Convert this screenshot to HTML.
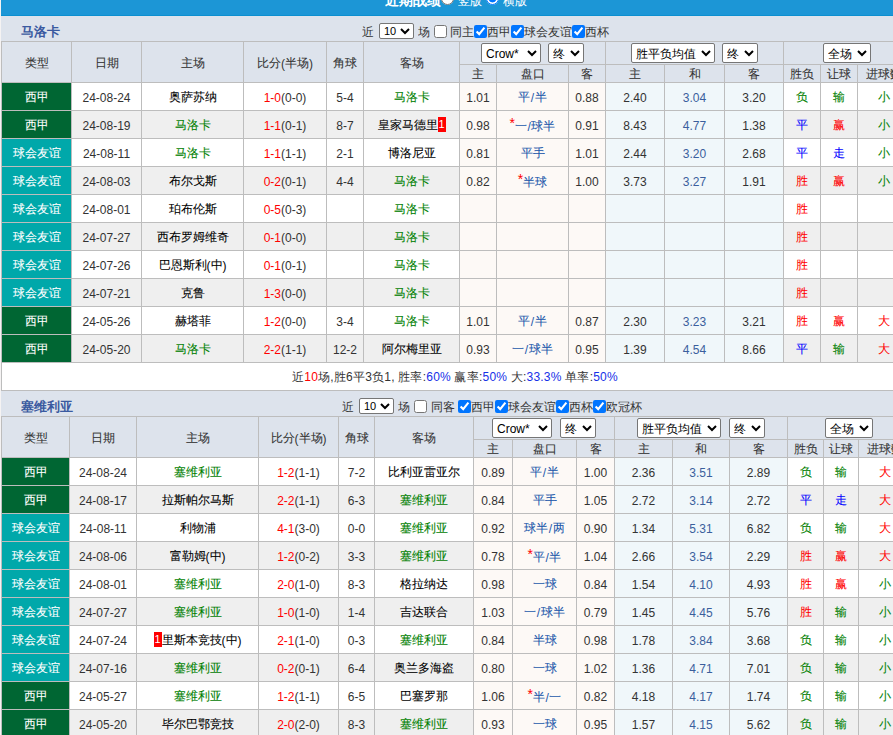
<!DOCTYPE html>
<html><head><meta charset="utf-8">
<style>
html,body{margin:0;padding:0;overflow:hidden;width:893px;height:735px;background:#f5f3f3}
body{font-family:"Liberation Sans",sans-serif;font-size:12px;position:relative}
div{position:absolute;box-sizing:border-box;overflow:hidden}
.rc{display:inline-block;background:#f00;color:#fff;font-size:11px;line-height:15px;height:15px;width:8px;text-align:center;vertical-align:2px}
.z{position:relative;top:-1px;-webkit-text-stroke:0.08px}
.bl{color:#1530e8}
.cb{width:13px;height:13px;margin:0;display:block}
.cb0{margin:0 2px}
.sl{font-family:"Liberation Sans",sans-serif;font-size:12px;height:20px;padding:1px 0 0 0;margin:0;border:1px solid #767676;border-radius:2px;display:block;background:#fff;color:#000}
.s10{width:35px;height:16px;font-size:11px;padding:0}
.rd{width:13px;height:13px;margin:0;display:block}
</style></head><body>
<div style="left:1px;top:0;width:893px;height:16px;background:#1c96d6;border-bottom:0"></div>
<div style="left:1px;top:15px;width:893px;height:1px;background:#0b8fd0"></div>
<div style="left:1px;top:16px;width:893px;height:1px;background:#e6e7ec"></div>
<div style="left:385px;top:-9px;width:60px;height:18px;line-height:18px;white-space:nowrap;color:#fff;font-size:14px;font-weight:bold">近期战绩</div>
<div style="left:441px;top:-8px;width:13px;height:13px"><input type="radio" name="r" class="rd"></div>
<div style="left:458px;top:-7px;width:30px;height:16px;line-height:16px;white-space:nowrap;color:#fff;font-size:12px">竖版</div>
<div style="left:486px;top:-8px;width:13px;height:13px"><input type="radio" name="r" class="rd" checked></div>
<div style="left:503px;top:-7px;width:30px;height:16px;line-height:16px;white-space:nowrap;color:#fff;font-size:12px">横版</div>

<div style="left:1px;top:16px;width:893px;height:25px;background:#dde3ec"></div><div style="left:21px;top:17px;width:100px;height:24px;line-height:24px;padding-top:3px;font-weight:bold;font-size:13px;color:#3a5aa0">马洛卡</div><div style="left:362px;top:22px;width:120px;height:17px;line-height:16px;white-space:nowrap;font-size:12px;color:#333;padding-top:2px">近</div><div style="left:379px;top:23px;width:36px;height:16px;"><select class="sl s10"><option>10</option></select></div><div style="left:418px;top:22px;width:120px;height:17px;line-height:16px;white-space:nowrap;font-size:12px;color:#333;padding-top:2px">场</div><div style="left:434px;top:25px;width:13px;height:13px;"><input type="checkbox" class="cb" ></div><div style="left:450px;top:22px;width:120px;height:17px;line-height:16px;white-space:nowrap;font-size:12px;color:#333;padding-top:2px">同主</div><div style="left:474px;top:25px;width:13px;height:13px;"><input type="checkbox" class="cb" checked></div><div style="left:487px;top:22px;width:120px;height:17px;line-height:16px;white-space:nowrap;font-size:12px;color:#333;padding-top:2px">西甲</div><div style="left:511px;top:25px;width:13px;height:13px;"><input type="checkbox" class="cb" checked></div><div style="left:524px;top:22px;width:120px;height:17px;line-height:16px;white-space:nowrap;font-size:12px;color:#333;padding-top:2px">球会友谊</div><div style="left:572px;top:25px;width:13px;height:13px;"><input type="checkbox" class="cb" checked></div><div style="left:585px;top:22px;width:120px;height:17px;line-height:16px;white-space:nowrap;font-size:12px;color:#333;padding-top:2px">西杯</div><div style="left:1px;top:41px;width:910px;height:322px;background:#bdbdbd"></div><div style="left:2px;top:42px;width:69px;height:40px;background:#dde3ec;line-height:40px;padding-top:2px;text-align:center;color:#333"><span class="z">类型</span></div><div style="left:72px;top:42px;width:69px;height:40px;background:#dde3ec;line-height:40px;padding-top:2px;text-align:center;color:#333"><span class="z">日期</span></div><div style="left:142px;top:42px;width:101px;height:40px;background:#dde3ec;line-height:40px;padding-top:2px;text-align:center;color:#333"><span class="z">主场</span></div><div style="left:244px;top:42px;width:82px;height:40px;background:#dde3ec;line-height:40px;padding-top:2px;text-align:center;color:#333"><span class="z">比分</span>(<span class="z">半场</span>)</div><div style="left:327px;top:42px;width:36px;height:40px;background:#dde3ec;line-height:40px;padding-top:2px;text-align:center;color:#333"><span class="z">角球</span></div><div style="left:364px;top:42px;width:95px;height:40px;background:#dde3ec;line-height:40px;padding-top:2px;text-align:center;color:#333"><span class="z">客场</span></div><div style="left:460px;top:42px;width:145px;height:22px;background:#dde3ec;line-height:22px;padding-top:2px;"></div><div style="left:606px;top:42px;width:177px;height:22px;background:#dde3ec;line-height:22px;padding-top:2px;"></div><div style="left:784px;top:42px;width:126px;height:22px;background:#dde3ec;line-height:22px;padding-top:2px;"></div><div style="left:460px;top:65px;width:36px;height:17px;background:#dde3ec;line-height:17px;padding-top:2px;text-align:center;color:#333"><span class="z">主</span></div><div style="left:497px;top:65px;width:71px;height:17px;background:#dde3ec;line-height:17px;padding-top:2px;text-align:center;color:#333"><span class="z">盘口</span></div><div style="left:569px;top:65px;width:36px;height:17px;background:#dde3ec;line-height:17px;padding-top:2px;text-align:center;color:#333"><span class="z">客</span></div><div style="left:606px;top:65px;width:58px;height:17px;background:#dde3ec;line-height:17px;padding-top:2px;text-align:center;color:#333"><span class="z">主</span></div><div style="left:665px;top:65px;width:59px;height:17px;background:#dde3ec;line-height:17px;padding-top:2px;text-align:center;color:#333"><span class="z">和</span></div><div style="left:725px;top:65px;width:58px;height:17px;background:#dde3ec;line-height:17px;padding-top:2px;text-align:center;color:#333"><span class="z">客</span></div><div style="left:784px;top:65px;width:36px;height:17px;background:#dde3ec;line-height:17px;padding-top:2px;text-align:center;color:#333"><span class="z">胜负</span></div><div style="left:821px;top:65px;width:36px;height:17px;background:#dde3ec;line-height:17px;padding-top:2px;text-align:center;color:#333"><span class="z">让球</span></div><div style="left:858px;top:65px;width:52px;height:17px;background:#dde3ec;line-height:17px;padding-top:2px;text-align:center;color:#333"><span class="z">进球数</span></div><div style="left:481px;top:43px;width:60px;height:20px;"><select class="sl" style="width:60px"><option>Crow*</option></select></div><div style="left:548px;top:43px;width:36px;height:20px;"><select class="sl" style="width:36px"><option>终</option></select></div><div style="left:631px;top:43px;width:84px;height:20px;"><select class="sl" style="width:84px"><option>胜平负均值</option></select></div><div style="left:722px;top:43px;width:36px;height:20px;"><select class="sl" style="width:36px"><option>终</option></select></div><div style="left:823px;top:43px;width:48px;height:20px;"><select class="sl" style="width:48px"><option>全场</option></select></div><div style="left:2px;top:83px;width:69px;height:27px;background:#006633;line-height:27px;padding-top:2px;text-align:center;color:#fff"><span class="z">西甲</span></div><div style="left:72px;top:83px;width:69px;height:27px;background:#ffffff;line-height:27px;padding-top:2px;text-align:center;color:#333">24-08-24</div><div style="left:142px;top:83px;width:101px;height:27px;background:#ffffff;line-height:27px;padding-top:2px;text-align:center;color:#000"><span class="z">奥萨苏纳</span></div><div style="left:244px;top:83px;width:82px;height:27px;background:#ffffff;line-height:27px;padding-top:2px;text-align:center;color:#333"><span style="color:#ff0000">1-0</span>(0-0)</div><div style="left:327px;top:83px;width:36px;height:27px;background:#ffffff;line-height:27px;padding-top:2px;text-align:center;color:#333">5-4</div><div style="left:364px;top:83px;width:95px;height:27px;background:#ffffff;line-height:27px;padding-top:2px;text-align:center;color:#000"><span style="color:#008000"><span class="z">马洛卡</span></span></div><div style="left:460px;top:83px;width:36px;height:27px;background:#fdf9f6;line-height:27px;padding-top:2px;text-align:center;color:#333">1.01</div><div style="left:497px;top:83px;width:71px;height:27px;background:#fdf9f6;line-height:27px;padding-top:2px;text-align:center;color:#2358ab"><span class="z">平</span><span style="margin:0 0.5px">/</span><span class="z">半</span></div><div style="left:569px;top:83px;width:36px;height:27px;background:#fdf9f6;line-height:27px;padding-top:2px;text-align:center;color:#333">0.88</div><div style="left:606px;top:83px;width:58px;height:27px;background:#f0f7fa;line-height:27px;padding-top:2px;text-align:center;color:#333">2.40</div><div style="left:665px;top:83px;width:59px;height:27px;background:#f0f7fa;line-height:27px;padding-top:2px;text-align:center;color:#3b5f9d">3.04</div><div style="left:725px;top:83px;width:58px;height:27px;background:#f0f7fa;line-height:27px;padding-top:2px;text-align:center;color:#333">3.20</div><div style="left:784px;top:83px;width:36px;height:27px;background:#ffffff;line-height:27px;padding-top:2px;text-align:center;color:#008000"><span class="z">负</span></div><div style="left:821px;top:83px;width:36px;height:27px;background:#ffffff;line-height:27px;padding-top:2px;text-align:center;color:#008000"><span class="z">输</span></div><div style="left:858px;top:83px;width:52px;height:27px;background:#ffffff;line-height:27px;padding-top:2px;text-align:center;color:#008000"><span class="z">小</span></div><div style="left:2px;top:111px;width:69px;height:27px;background:#006633;line-height:27px;padding-top:2px;text-align:center;color:#fff"><span class="z">西甲</span></div><div style="left:72px;top:111px;width:69px;height:27px;background:#efefef;line-height:27px;padding-top:2px;text-align:center;color:#333">24-08-19</div><div style="left:142px;top:111px;width:101px;height:27px;background:#efefef;line-height:27px;padding-top:2px;text-align:center;color:#000"><span style="color:#008000"><span class="z">马洛卡</span></span></div><div style="left:244px;top:111px;width:82px;height:27px;background:#efefef;line-height:27px;padding-top:2px;text-align:center;color:#333"><span style="color:#ff0000">1-1</span>(0-1)</div><div style="left:327px;top:111px;width:36px;height:27px;background:#efefef;line-height:27px;padding-top:2px;text-align:center;color:#333">8-7</div><div style="left:364px;top:111px;width:95px;height:27px;background:#efefef;line-height:27px;padding-top:2px;text-align:center;color:#000"><span class="z">皇家马德里</span><span class="rc">1</span></div><div style="left:460px;top:111px;width:36px;height:27px;background:#fdf9f6;line-height:27px;padding-top:2px;text-align:center;color:#333">0.98</div><div style="left:497px;top:111px;width:71px;height:27px;background:#fdf9f6;line-height:27px;padding-top:2px;text-align:center;color:#2358ab"><span style="color:#ff0000;position:relative;top:-3px;font-size:14px">*</span><span class="z">一</span><span style="margin:0 0.5px">/</span><span class="z">球半</span></div><div style="left:569px;top:111px;width:36px;height:27px;background:#fdf9f6;line-height:27px;padding-top:2px;text-align:center;color:#333">0.91</div><div style="left:606px;top:111px;width:58px;height:27px;background:#f0f7fa;line-height:27px;padding-top:2px;text-align:center;color:#333">8.43</div><div style="left:665px;top:111px;width:59px;height:27px;background:#f0f7fa;line-height:27px;padding-top:2px;text-align:center;color:#3b5f9d">4.77</div><div style="left:725px;top:111px;width:58px;height:27px;background:#f0f7fa;line-height:27px;padding-top:2px;text-align:center;color:#333">1.38</div><div style="left:784px;top:111px;width:36px;height:27px;background:#efefef;line-height:27px;padding-top:2px;text-align:center;color:#0000ff"><span class="z">平</span></div><div style="left:821px;top:111px;width:36px;height:27px;background:#efefef;line-height:27px;padding-top:2px;text-align:center;color:#ff0000"><span class="z">赢</span></div><div style="left:858px;top:111px;width:52px;height:27px;background:#efefef;line-height:27px;padding-top:2px;text-align:center;color:#008000"><span class="z">小</span></div><div style="left:2px;top:139px;width:69px;height:27px;background:#00a8aa;line-height:27px;padding-top:2px;text-align:center;color:#fff"><span class="z">球会友谊</span></div><div style="left:72px;top:139px;width:69px;height:27px;background:#ffffff;line-height:27px;padding-top:2px;text-align:center;color:#333">24-08-11</div><div style="left:142px;top:139px;width:101px;height:27px;background:#ffffff;line-height:27px;padding-top:2px;text-align:center;color:#000"><span style="color:#008000"><span class="z">马洛卡</span></span></div><div style="left:244px;top:139px;width:82px;height:27px;background:#ffffff;line-height:27px;padding-top:2px;text-align:center;color:#333"><span style="color:#ff0000">1-1</span>(1-1)</div><div style="left:327px;top:139px;width:36px;height:27px;background:#ffffff;line-height:27px;padding-top:2px;text-align:center;color:#333">2-1</div><div style="left:364px;top:139px;width:95px;height:27px;background:#ffffff;line-height:27px;padding-top:2px;text-align:center;color:#000"><span class="z">博洛尼亚</span></div><div style="left:460px;top:139px;width:36px;height:27px;background:#fdf9f6;line-height:27px;padding-top:2px;text-align:center;color:#333">0.81</div><div style="left:497px;top:139px;width:71px;height:27px;background:#fdf9f6;line-height:27px;padding-top:2px;text-align:center;color:#2358ab"><span class="z">平手</span></div><div style="left:569px;top:139px;width:36px;height:27px;background:#fdf9f6;line-height:27px;padding-top:2px;text-align:center;color:#333">1.01</div><div style="left:606px;top:139px;width:58px;height:27px;background:#f0f7fa;line-height:27px;padding-top:2px;text-align:center;color:#333">2.44</div><div style="left:665px;top:139px;width:59px;height:27px;background:#f0f7fa;line-height:27px;padding-top:2px;text-align:center;color:#3b5f9d">3.20</div><div style="left:725px;top:139px;width:58px;height:27px;background:#f0f7fa;line-height:27px;padding-top:2px;text-align:center;color:#333">2.68</div><div style="left:784px;top:139px;width:36px;height:27px;background:#ffffff;line-height:27px;padding-top:2px;text-align:center;color:#0000ff"><span class="z">平</span></div><div style="left:821px;top:139px;width:36px;height:27px;background:#ffffff;line-height:27px;padding-top:2px;text-align:center;color:#0000ff"><span class="z">走</span></div><div style="left:858px;top:139px;width:52px;height:27px;background:#ffffff;line-height:27px;padding-top:2px;text-align:center;color:#008000"><span class="z">小</span></div><div style="left:2px;top:167px;width:69px;height:27px;background:#00a8aa;line-height:27px;padding-top:2px;text-align:center;color:#fff"><span class="z">球会友谊</span></div><div style="left:72px;top:167px;width:69px;height:27px;background:#efefef;line-height:27px;padding-top:2px;text-align:center;color:#333">24-08-03</div><div style="left:142px;top:167px;width:101px;height:27px;background:#efefef;line-height:27px;padding-top:2px;text-align:center;color:#000"><span class="z">布尔戈斯</span></div><div style="left:244px;top:167px;width:82px;height:27px;background:#efefef;line-height:27px;padding-top:2px;text-align:center;color:#333"><span style="color:#ff0000">0-2</span>(0-1)</div><div style="left:327px;top:167px;width:36px;height:27px;background:#efefef;line-height:27px;padding-top:2px;text-align:center;color:#333">4-4</div><div style="left:364px;top:167px;width:95px;height:27px;background:#efefef;line-height:27px;padding-top:2px;text-align:center;color:#000"><span style="color:#008000"><span class="z">马洛卡</span></span></div><div style="left:460px;top:167px;width:36px;height:27px;background:#fdf9f6;line-height:27px;padding-top:2px;text-align:center;color:#333">0.82</div><div style="left:497px;top:167px;width:71px;height:27px;background:#fdf9f6;line-height:27px;padding-top:2px;text-align:center;color:#2358ab"><span style="color:#ff0000;position:relative;top:-3px;font-size:14px">*</span><span class="z">半球</span></div><div style="left:569px;top:167px;width:36px;height:27px;background:#fdf9f6;line-height:27px;padding-top:2px;text-align:center;color:#333">1.00</div><div style="left:606px;top:167px;width:58px;height:27px;background:#f0f7fa;line-height:27px;padding-top:2px;text-align:center;color:#333">3.73</div><div style="left:665px;top:167px;width:59px;height:27px;background:#f0f7fa;line-height:27px;padding-top:2px;text-align:center;color:#3b5f9d">3.27</div><div style="left:725px;top:167px;width:58px;height:27px;background:#f0f7fa;line-height:27px;padding-top:2px;text-align:center;color:#333">1.91</div><div style="left:784px;top:167px;width:36px;height:27px;background:#efefef;line-height:27px;padding-top:2px;text-align:center;color:#ff0000"><span class="z">胜</span></div><div style="left:821px;top:167px;width:36px;height:27px;background:#efefef;line-height:27px;padding-top:2px;text-align:center;color:#ff0000"><span class="z">赢</span></div><div style="left:858px;top:167px;width:52px;height:27px;background:#efefef;line-height:27px;padding-top:2px;text-align:center;color:#008000"><span class="z">小</span></div><div style="left:2px;top:195px;width:69px;height:27px;background:#00a8aa;line-height:27px;padding-top:2px;text-align:center;color:#fff"><span class="z">球会友谊</span></div><div style="left:72px;top:195px;width:69px;height:27px;background:#ffffff;line-height:27px;padding-top:2px;text-align:center;color:#333">24-08-01</div><div style="left:142px;top:195px;width:101px;height:27px;background:#ffffff;line-height:27px;padding-top:2px;text-align:center;color:#000"><span class="z">珀布伦斯</span></div><div style="left:244px;top:195px;width:82px;height:27px;background:#ffffff;line-height:27px;padding-top:2px;text-align:center;color:#333"><span style="color:#ff0000">0-5</span>(0-3)</div><div style="left:327px;top:195px;width:36px;height:27px;background:#ffffff;line-height:27px;padding-top:2px;text-align:center;color:#333"></div><div style="left:364px;top:195px;width:95px;height:27px;background:#ffffff;line-height:27px;padding-top:2px;text-align:center;color:#000"><span style="color:#008000"><span class="z">马洛卡</span></span></div><div style="left:460px;top:195px;width:36px;height:27px;background:#fdf9f6;line-height:27px;padding-top:2px;text-align:center;color:#333"></div><div style="left:497px;top:195px;width:71px;height:27px;background:#fdf9f6;line-height:27px;padding-top:2px;text-align:center;color:#2358ab"></div><div style="left:569px;top:195px;width:36px;height:27px;background:#fdf9f6;line-height:27px;padding-top:2px;text-align:center;color:#333"></div><div style="left:606px;top:195px;width:58px;height:27px;background:#f0f7fa;line-height:27px;padding-top:2px;text-align:center;color:#333"></div><div style="left:665px;top:195px;width:59px;height:27px;background:#f0f7fa;line-height:27px;padding-top:2px;text-align:center;color:#3b5f9d"></div><div style="left:725px;top:195px;width:58px;height:27px;background:#f0f7fa;line-height:27px;padding-top:2px;text-align:center;color:#333"></div><div style="left:784px;top:195px;width:36px;height:27px;background:#ffffff;line-height:27px;padding-top:2px;text-align:center;color:#ff0000"><span class="z">胜</span></div><div style="left:821px;top:195px;width:36px;height:27px;background:#ffffff;line-height:27px;padding-top:2px;text-align:center;color:#222222"></div><div style="left:858px;top:195px;width:52px;height:27px;background:#ffffff;line-height:27px;padding-top:2px;text-align:center;color:#222222"></div><div style="left:2px;top:223px;width:69px;height:27px;background:#00a8aa;line-height:27px;padding-top:2px;text-align:center;color:#fff"><span class="z">球会友谊</span></div><div style="left:72px;top:223px;width:69px;height:27px;background:#efefef;line-height:27px;padding-top:2px;text-align:center;color:#333">24-07-27</div><div style="left:142px;top:223px;width:101px;height:27px;background:#efefef;line-height:27px;padding-top:2px;text-align:center;color:#000"><span class="z">西布罗姆维奇</span></div><div style="left:244px;top:223px;width:82px;height:27px;background:#efefef;line-height:27px;padding-top:2px;text-align:center;color:#333"><span style="color:#ff0000">0-1</span>(0-0)</div><div style="left:327px;top:223px;width:36px;height:27px;background:#efefef;line-height:27px;padding-top:2px;text-align:center;color:#333"></div><div style="left:364px;top:223px;width:95px;height:27px;background:#efefef;line-height:27px;padding-top:2px;text-align:center;color:#000"><span style="color:#008000"><span class="z">马洛卡</span></span></div><div style="left:460px;top:223px;width:36px;height:27px;background:#fdf9f6;line-height:27px;padding-top:2px;text-align:center;color:#333"></div><div style="left:497px;top:223px;width:71px;height:27px;background:#fdf9f6;line-height:27px;padding-top:2px;text-align:center;color:#2358ab"></div><div style="left:569px;top:223px;width:36px;height:27px;background:#fdf9f6;line-height:27px;padding-top:2px;text-align:center;color:#333"></div><div style="left:606px;top:223px;width:58px;height:27px;background:#f0f7fa;line-height:27px;padding-top:2px;text-align:center;color:#333"></div><div style="left:665px;top:223px;width:59px;height:27px;background:#f0f7fa;line-height:27px;padding-top:2px;text-align:center;color:#3b5f9d"></div><div style="left:725px;top:223px;width:58px;height:27px;background:#f0f7fa;line-height:27px;padding-top:2px;text-align:center;color:#333"></div><div style="left:784px;top:223px;width:36px;height:27px;background:#efefef;line-height:27px;padding-top:2px;text-align:center;color:#ff0000"><span class="z">胜</span></div><div style="left:821px;top:223px;width:36px;height:27px;background:#efefef;line-height:27px;padding-top:2px;text-align:center;color:#222222"></div><div style="left:858px;top:223px;width:52px;height:27px;background:#efefef;line-height:27px;padding-top:2px;text-align:center;color:#222222"></div><div style="left:2px;top:251px;width:69px;height:27px;background:#00a8aa;line-height:27px;padding-top:2px;text-align:center;color:#fff"><span class="z">球会友谊</span></div><div style="left:72px;top:251px;width:69px;height:27px;background:#ffffff;line-height:27px;padding-top:2px;text-align:center;color:#333">24-07-26</div><div style="left:142px;top:251px;width:101px;height:27px;background:#ffffff;line-height:27px;padding-top:2px;text-align:center;color:#000"><span class="z">巴恩斯利</span>(<span class="z">中</span>)</div><div style="left:244px;top:251px;width:82px;height:27px;background:#ffffff;line-height:27px;padding-top:2px;text-align:center;color:#333"><span style="color:#ff0000">0-1</span>(0-1)</div><div style="left:327px;top:251px;width:36px;height:27px;background:#ffffff;line-height:27px;padding-top:2px;text-align:center;color:#333"></div><div style="left:364px;top:251px;width:95px;height:27px;background:#ffffff;line-height:27px;padding-top:2px;text-align:center;color:#000"><span style="color:#008000"><span class="z">马洛卡</span></span></div><div style="left:460px;top:251px;width:36px;height:27px;background:#fdf9f6;line-height:27px;padding-top:2px;text-align:center;color:#333"></div><div style="left:497px;top:251px;width:71px;height:27px;background:#fdf9f6;line-height:27px;padding-top:2px;text-align:center;color:#2358ab"></div><div style="left:569px;top:251px;width:36px;height:27px;background:#fdf9f6;line-height:27px;padding-top:2px;text-align:center;color:#333"></div><div style="left:606px;top:251px;width:58px;height:27px;background:#f0f7fa;line-height:27px;padding-top:2px;text-align:center;color:#333"></div><div style="left:665px;top:251px;width:59px;height:27px;background:#f0f7fa;line-height:27px;padding-top:2px;text-align:center;color:#3b5f9d"></div><div style="left:725px;top:251px;width:58px;height:27px;background:#f0f7fa;line-height:27px;padding-top:2px;text-align:center;color:#333"></div><div style="left:784px;top:251px;width:36px;height:27px;background:#ffffff;line-height:27px;padding-top:2px;text-align:center;color:#ff0000"><span class="z">胜</span></div><div style="left:821px;top:251px;width:36px;height:27px;background:#ffffff;line-height:27px;padding-top:2px;text-align:center;color:#222222"></div><div style="left:858px;top:251px;width:52px;height:27px;background:#ffffff;line-height:27px;padding-top:2px;text-align:center;color:#222222"></div><div style="left:2px;top:279px;width:69px;height:27px;background:#00a8aa;line-height:27px;padding-top:2px;text-align:center;color:#fff"><span class="z">球会友谊</span></div><div style="left:72px;top:279px;width:69px;height:27px;background:#efefef;line-height:27px;padding-top:2px;text-align:center;color:#333">24-07-21</div><div style="left:142px;top:279px;width:101px;height:27px;background:#efefef;line-height:27px;padding-top:2px;text-align:center;color:#000"><span class="z">克鲁</span></div><div style="left:244px;top:279px;width:82px;height:27px;background:#efefef;line-height:27px;padding-top:2px;text-align:center;color:#333"><span style="color:#ff0000">1-3</span>(0-0)</div><div style="left:327px;top:279px;width:36px;height:27px;background:#efefef;line-height:27px;padding-top:2px;text-align:center;color:#333"></div><div style="left:364px;top:279px;width:95px;height:27px;background:#efefef;line-height:27px;padding-top:2px;text-align:center;color:#000"><span style="color:#008000"><span class="z">马洛卡</span></span></div><div style="left:460px;top:279px;width:36px;height:27px;background:#fdf9f6;line-height:27px;padding-top:2px;text-align:center;color:#333"></div><div style="left:497px;top:279px;width:71px;height:27px;background:#fdf9f6;line-height:27px;padding-top:2px;text-align:center;color:#2358ab"></div><div style="left:569px;top:279px;width:36px;height:27px;background:#fdf9f6;line-height:27px;padding-top:2px;text-align:center;color:#333"></div><div style="left:606px;top:279px;width:58px;height:27px;background:#f0f7fa;line-height:27px;padding-top:2px;text-align:center;color:#333"></div><div style="left:665px;top:279px;width:59px;height:27px;background:#f0f7fa;line-height:27px;padding-top:2px;text-align:center;color:#3b5f9d"></div><div style="left:725px;top:279px;width:58px;height:27px;background:#f0f7fa;line-height:27px;padding-top:2px;text-align:center;color:#333"></div><div style="left:784px;top:279px;width:36px;height:27px;background:#efefef;line-height:27px;padding-top:2px;text-align:center;color:#ff0000"><span class="z">胜</span></div><div style="left:821px;top:279px;width:36px;height:27px;background:#efefef;line-height:27px;padding-top:2px;text-align:center;color:#222222"></div><div style="left:858px;top:279px;width:52px;height:27px;background:#efefef;line-height:27px;padding-top:2px;text-align:center;color:#222222"></div><div style="left:2px;top:307px;width:69px;height:27px;background:#006633;line-height:27px;padding-top:2px;text-align:center;color:#fff"><span class="z">西甲</span></div><div style="left:72px;top:307px;width:69px;height:27px;background:#ffffff;line-height:27px;padding-top:2px;text-align:center;color:#333">24-05-26</div><div style="left:142px;top:307px;width:101px;height:27px;background:#ffffff;line-height:27px;padding-top:2px;text-align:center;color:#000"><span class="z">赫塔菲</span></div><div style="left:244px;top:307px;width:82px;height:27px;background:#ffffff;line-height:27px;padding-top:2px;text-align:center;color:#333"><span style="color:#ff0000">1-2</span>(0-0)</div><div style="left:327px;top:307px;width:36px;height:27px;background:#ffffff;line-height:27px;padding-top:2px;text-align:center;color:#333">3-4</div><div style="left:364px;top:307px;width:95px;height:27px;background:#ffffff;line-height:27px;padding-top:2px;text-align:center;color:#000"><span style="color:#008000"><span class="z">马洛卡</span></span></div><div style="left:460px;top:307px;width:36px;height:27px;background:#fdf9f6;line-height:27px;padding-top:2px;text-align:center;color:#333">1.01</div><div style="left:497px;top:307px;width:71px;height:27px;background:#fdf9f6;line-height:27px;padding-top:2px;text-align:center;color:#2358ab"><span class="z">平</span><span style="margin:0 0.5px">/</span><span class="z">半</span></div><div style="left:569px;top:307px;width:36px;height:27px;background:#fdf9f6;line-height:27px;padding-top:2px;text-align:center;color:#333">0.87</div><div style="left:606px;top:307px;width:58px;height:27px;background:#f0f7fa;line-height:27px;padding-top:2px;text-align:center;color:#333">2.30</div><div style="left:665px;top:307px;width:59px;height:27px;background:#f0f7fa;line-height:27px;padding-top:2px;text-align:center;color:#3b5f9d">3.23</div><div style="left:725px;top:307px;width:58px;height:27px;background:#f0f7fa;line-height:27px;padding-top:2px;text-align:center;color:#333">3.21</div><div style="left:784px;top:307px;width:36px;height:27px;background:#ffffff;line-height:27px;padding-top:2px;text-align:center;color:#ff0000"><span class="z">胜</span></div><div style="left:821px;top:307px;width:36px;height:27px;background:#ffffff;line-height:27px;padding-top:2px;text-align:center;color:#ff0000"><span class="z">赢</span></div><div style="left:858px;top:307px;width:52px;height:27px;background:#ffffff;line-height:27px;padding-top:2px;text-align:center;color:#ff0000"><span class="z">大</span></div><div style="left:2px;top:335px;width:69px;height:27px;background:#006633;line-height:27px;padding-top:2px;text-align:center;color:#fff"><span class="z">西甲</span></div><div style="left:72px;top:335px;width:69px;height:27px;background:#efefef;line-height:27px;padding-top:2px;text-align:center;color:#333">24-05-20</div><div style="left:142px;top:335px;width:101px;height:27px;background:#efefef;line-height:27px;padding-top:2px;text-align:center;color:#000"><span style="color:#008000"><span class="z">马洛卡</span></span></div><div style="left:244px;top:335px;width:82px;height:27px;background:#efefef;line-height:27px;padding-top:2px;text-align:center;color:#333"><span style="color:#ff0000">2-2</span>(1-1)</div><div style="left:327px;top:335px;width:36px;height:27px;background:#efefef;line-height:27px;padding-top:2px;text-align:center;color:#333">12-2</div><div style="left:364px;top:335px;width:95px;height:27px;background:#efefef;line-height:27px;padding-top:2px;text-align:center;color:#000"><span class="z">阿尔梅里亚</span></div><div style="left:460px;top:335px;width:36px;height:27px;background:#fdf9f6;line-height:27px;padding-top:2px;text-align:center;color:#333">0.93</div><div style="left:497px;top:335px;width:71px;height:27px;background:#fdf9f6;line-height:27px;padding-top:2px;text-align:center;color:#2358ab"><span class="z">一</span><span style="margin:0 0.5px">/</span><span class="z">球半</span></div><div style="left:569px;top:335px;width:36px;height:27px;background:#fdf9f6;line-height:27px;padding-top:2px;text-align:center;color:#333">0.95</div><div style="left:606px;top:335px;width:58px;height:27px;background:#f0f7fa;line-height:27px;padding-top:2px;text-align:center;color:#333">1.39</div><div style="left:665px;top:335px;width:59px;height:27px;background:#f0f7fa;line-height:27px;padding-top:2px;text-align:center;color:#3b5f9d">4.54</div><div style="left:725px;top:335px;width:58px;height:27px;background:#f0f7fa;line-height:27px;padding-top:2px;text-align:center;color:#333">8.66</div><div style="left:784px;top:335px;width:36px;height:27px;background:#efefef;line-height:27px;padding-top:2px;text-align:center;color:#0000ff"><span class="z">平</span></div><div style="left:821px;top:335px;width:36px;height:27px;background:#efefef;line-height:27px;padding-top:2px;text-align:center;color:#008000"><span class="z">输</span></div><div style="left:858px;top:335px;width:52px;height:27px;background:#efefef;line-height:27px;padding-top:2px;text-align:center;color:#ff0000"><span class="z">大</span></div><div style="left:1px;top:362px;width:893px;height:29px;background:#bdbdbd"></div><div style="left:2px;top:363px;width:893px;height:27px;background:#fff"></div><div style="left:2px;top:363px;width:893px;height:27px;line-height:27px;text-align:left;color:#333;white-space:nowrap;padding-left:290px;padding-top:1px;letter-spacing:0.22px">近<span style="color:#ff0000">10</span>场,胜6平3负1, 胜率:<span class="bl">60%</span> 赢率:<span class="bl">50%</span> 大:<span class="bl">33.3%</span> 单率:<span class="bl">50%</span></div><div style="left:1px;top:391px;width:893px;height:25px;background:#dde3ec"></div><div style="left:21px;top:392px;width:100px;height:24px;line-height:24px;padding-top:3px;font-weight:bold;font-size:13px;color:#3a5aa0">塞维利亚</div><div style="left:342px;top:397px;width:120px;height:17px;line-height:16px;white-space:nowrap;font-size:12px;color:#333;padding-top:2px">近</div><div style="left:359px;top:398px;width:36px;height:16px;"><select class="sl s10"><option>10</option></select></div><div style="left:398px;top:397px;width:120px;height:17px;line-height:16px;white-space:nowrap;font-size:12px;color:#333;padding-top:2px">场</div><div style="left:414px;top:400px;width:13px;height:13px;"><input type="checkbox" class="cb" ></div><div style="left:431px;top:397px;width:120px;height:17px;line-height:16px;white-space:nowrap;font-size:12px;color:#333;padding-top:2px">同客</div><div style="left:458px;top:400px;width:13px;height:13px;"><input type="checkbox" class="cb" checked></div><div style="left:471px;top:397px;width:120px;height:17px;line-height:16px;white-space:nowrap;font-size:12px;color:#333;padding-top:2px">西甲</div><div style="left:495px;top:400px;width:13px;height:13px;"><input type="checkbox" class="cb" checked></div><div style="left:508px;top:397px;width:120px;height:17px;line-height:16px;white-space:nowrap;font-size:12px;color:#333;padding-top:2px">球会友谊</div><div style="left:556px;top:400px;width:13px;height:13px;"><input type="checkbox" class="cb" checked></div><div style="left:569px;top:397px;width:120px;height:17px;line-height:16px;white-space:nowrap;font-size:12px;color:#333;padding-top:2px">西杯</div><div style="left:593px;top:400px;width:13px;height:13px;"><input type="checkbox" class="cb" checked></div><div style="left:606px;top:397px;width:120px;height:17px;line-height:16px;white-space:nowrap;font-size:12px;color:#333;padding-top:2px">欧冠杯</div><div style="left:1px;top:416px;width:910px;height:322px;background:#bdbdbd"></div><div style="left:2px;top:417px;width:67px;height:40px;background:#dde3ec;line-height:40px;padding-top:2px;text-align:center;color:#333"><span class="z">类型</span></div><div style="left:70px;top:417px;width:66px;height:40px;background:#dde3ec;line-height:40px;padding-top:2px;text-align:center;color:#333"><span class="z">日期</span></div><div style="left:137px;top:417px;width:121px;height:40px;background:#dde3ec;line-height:40px;padding-top:2px;text-align:center;color:#333"><span class="z">主场</span></div><div style="left:259px;top:417px;width:79px;height:40px;background:#dde3ec;line-height:40px;padding-top:2px;text-align:center;color:#333"><span class="z">比分</span>(<span class="z">半场</span>)</div><div style="left:339px;top:417px;width:35px;height:40px;background:#dde3ec;line-height:40px;padding-top:2px;text-align:center;color:#333"><span class="z">角球</span></div><div style="left:375px;top:417px;width:98px;height:40px;background:#dde3ec;line-height:40px;padding-top:2px;text-align:center;color:#333"><span class="z">客场</span></div><div style="left:474px;top:417px;width:140px;height:22px;background:#dde3ec;line-height:22px;padding-top:2px;"></div><div style="left:615px;top:417px;width:172px;height:22px;background:#dde3ec;line-height:22px;padding-top:2px;"></div><div style="left:788px;top:417px;width:122px;height:22px;background:#dde3ec;line-height:22px;padding-top:2px;"></div><div style="left:474px;top:440px;width:38px;height:17px;background:#dde3ec;line-height:17px;padding-top:2px;text-align:center;color:#333"><span class="z">主</span></div><div style="left:513px;top:440px;width:63px;height:17px;background:#dde3ec;line-height:17px;padding-top:2px;text-align:center;color:#333"><span class="z">盘口</span></div><div style="left:577px;top:440px;width:37px;height:17px;background:#dde3ec;line-height:17px;padding-top:2px;text-align:center;color:#333"><span class="z">客</span></div><div style="left:615px;top:440px;width:57px;height:17px;background:#dde3ec;line-height:17px;padding-top:2px;text-align:center;color:#333"><span class="z">主</span></div><div style="left:673px;top:440px;width:56px;height:17px;background:#dde3ec;line-height:17px;padding-top:2px;text-align:center;color:#333"><span class="z">和</span></div><div style="left:730px;top:440px;width:57px;height:17px;background:#dde3ec;line-height:17px;padding-top:2px;text-align:center;color:#333"><span class="z">客</span></div><div style="left:788px;top:440px;width:35px;height:17px;background:#dde3ec;line-height:17px;padding-top:2px;text-align:center;color:#333"><span class="z">胜负</span></div><div style="left:824px;top:440px;width:34px;height:17px;background:#dde3ec;line-height:17px;padding-top:2px;text-align:center;color:#333"><span class="z">让球</span></div><div style="left:859px;top:440px;width:51px;height:17px;background:#dde3ec;line-height:17px;padding-top:2px;text-align:center;color:#333"><span class="z">进球数</span></div><div style="left:492px;top:418px;width:60px;height:20px;"><select class="sl" style="width:60px"><option>Crow*</option></select></div><div style="left:560px;top:418px;width:36px;height:20px;"><select class="sl" style="width:36px"><option>终</option></select></div><div style="left:637px;top:418px;width:84px;height:20px;"><select class="sl" style="width:84px"><option>胜平负均值</option></select></div><div style="left:729px;top:418px;width:36px;height:20px;"><select class="sl" style="width:36px"><option>终</option></select></div><div style="left:825px;top:418px;width:48px;height:20px;"><select class="sl" style="width:48px"><option>全场</option></select></div><div style="left:2px;top:458px;width:67px;height:27px;background:#006633;line-height:27px;padding-top:2px;text-align:center;color:#fff"><span class="z">西甲</span></div><div style="left:70px;top:458px;width:66px;height:27px;background:#ffffff;line-height:27px;padding-top:2px;text-align:center;color:#333">24-08-24</div><div style="left:137px;top:458px;width:121px;height:27px;background:#ffffff;line-height:27px;padding-top:2px;text-align:center;color:#000"><span style="color:#008000"><span class="z">塞维利亚</span></span></div><div style="left:259px;top:458px;width:79px;height:27px;background:#ffffff;line-height:27px;padding-top:2px;text-align:center;color:#333"><span style="color:#ff0000">1-2</span>(1-1)</div><div style="left:339px;top:458px;width:35px;height:27px;background:#ffffff;line-height:27px;padding-top:2px;text-align:center;color:#333">7-2</div><div style="left:375px;top:458px;width:98px;height:27px;background:#ffffff;line-height:27px;padding-top:2px;text-align:center;color:#000"><span class="z">比利亚雷亚尔</span></div><div style="left:474px;top:458px;width:38px;height:27px;background:#fdf9f6;line-height:27px;padding-top:2px;text-align:center;color:#333">0.89</div><div style="left:513px;top:458px;width:63px;height:27px;background:#fdf9f6;line-height:27px;padding-top:2px;text-align:center;color:#2358ab"><span class="z">平</span><span style="margin:0 0.5px">/</span><span class="z">半</span></div><div style="left:577px;top:458px;width:37px;height:27px;background:#fdf9f6;line-height:27px;padding-top:2px;text-align:center;color:#333">1.00</div><div style="left:615px;top:458px;width:57px;height:27px;background:#f0f7fa;line-height:27px;padding-top:2px;text-align:center;color:#333">2.36</div><div style="left:673px;top:458px;width:56px;height:27px;background:#f0f7fa;line-height:27px;padding-top:2px;text-align:center;color:#3b5f9d">3.51</div><div style="left:730px;top:458px;width:57px;height:27px;background:#f0f7fa;line-height:27px;padding-top:2px;text-align:center;color:#333">2.89</div><div style="left:788px;top:458px;width:35px;height:27px;background:#ffffff;line-height:27px;padding-top:2px;text-align:center;color:#008000"><span class="z">负</span></div><div style="left:824px;top:458px;width:34px;height:27px;background:#ffffff;line-height:27px;padding-top:2px;text-align:center;color:#008000"><span class="z">输</span></div><div style="left:859px;top:458px;width:51px;height:27px;background:#ffffff;line-height:27px;padding-top:2px;text-align:center;color:#ff0000"><span class="z">大</span></div><div style="left:2px;top:486px;width:67px;height:27px;background:#006633;line-height:27px;padding-top:2px;text-align:center;color:#fff"><span class="z">西甲</span></div><div style="left:70px;top:486px;width:66px;height:27px;background:#efefef;line-height:27px;padding-top:2px;text-align:center;color:#333">24-08-17</div><div style="left:137px;top:486px;width:121px;height:27px;background:#efefef;line-height:27px;padding-top:2px;text-align:center;color:#000"><span class="z">拉斯帕尔马斯</span></div><div style="left:259px;top:486px;width:79px;height:27px;background:#efefef;line-height:27px;padding-top:2px;text-align:center;color:#333"><span style="color:#ff0000">2-2</span>(1-1)</div><div style="left:339px;top:486px;width:35px;height:27px;background:#efefef;line-height:27px;padding-top:2px;text-align:center;color:#333">6-3</div><div style="left:375px;top:486px;width:98px;height:27px;background:#efefef;line-height:27px;padding-top:2px;text-align:center;color:#000"><span style="color:#008000"><span class="z">塞维利亚</span></span></div><div style="left:474px;top:486px;width:38px;height:27px;background:#fdf9f6;line-height:27px;padding-top:2px;text-align:center;color:#333">0.84</div><div style="left:513px;top:486px;width:63px;height:27px;background:#fdf9f6;line-height:27px;padding-top:2px;text-align:center;color:#2358ab"><span class="z">平手</span></div><div style="left:577px;top:486px;width:37px;height:27px;background:#fdf9f6;line-height:27px;padding-top:2px;text-align:center;color:#333">1.05</div><div style="left:615px;top:486px;width:57px;height:27px;background:#f0f7fa;line-height:27px;padding-top:2px;text-align:center;color:#333">2.72</div><div style="left:673px;top:486px;width:56px;height:27px;background:#f0f7fa;line-height:27px;padding-top:2px;text-align:center;color:#3b5f9d">3.14</div><div style="left:730px;top:486px;width:57px;height:27px;background:#f0f7fa;line-height:27px;padding-top:2px;text-align:center;color:#333">2.72</div><div style="left:788px;top:486px;width:35px;height:27px;background:#efefef;line-height:27px;padding-top:2px;text-align:center;color:#0000ff"><span class="z">平</span></div><div style="left:824px;top:486px;width:34px;height:27px;background:#efefef;line-height:27px;padding-top:2px;text-align:center;color:#0000ff"><span class="z">走</span></div><div style="left:859px;top:486px;width:51px;height:27px;background:#efefef;line-height:27px;padding-top:2px;text-align:center;color:#ff0000"><span class="z">大</span></div><div style="left:2px;top:514px;width:67px;height:27px;background:#00a8aa;line-height:27px;padding-top:2px;text-align:center;color:#fff"><span class="z">球会友谊</span></div><div style="left:70px;top:514px;width:66px;height:27px;background:#ffffff;line-height:27px;padding-top:2px;text-align:center;color:#333">24-08-11</div><div style="left:137px;top:514px;width:121px;height:27px;background:#ffffff;line-height:27px;padding-top:2px;text-align:center;color:#000"><span class="z">利物浦</span></div><div style="left:259px;top:514px;width:79px;height:27px;background:#ffffff;line-height:27px;padding-top:2px;text-align:center;color:#333"><span style="color:#ff0000">4-1</span>(3-0)</div><div style="left:339px;top:514px;width:35px;height:27px;background:#ffffff;line-height:27px;padding-top:2px;text-align:center;color:#333">0-0</div><div style="left:375px;top:514px;width:98px;height:27px;background:#ffffff;line-height:27px;padding-top:2px;text-align:center;color:#000"><span style="color:#008000"><span class="z">塞维利亚</span></span></div><div style="left:474px;top:514px;width:38px;height:27px;background:#fdf9f6;line-height:27px;padding-top:2px;text-align:center;color:#333">0.92</div><div style="left:513px;top:514px;width:63px;height:27px;background:#fdf9f6;line-height:27px;padding-top:2px;text-align:center;color:#2358ab"><span class="z">球半</span><span style="margin:0 0.5px">/</span><span class="z">两</span></div><div style="left:577px;top:514px;width:37px;height:27px;background:#fdf9f6;line-height:27px;padding-top:2px;text-align:center;color:#333">0.90</div><div style="left:615px;top:514px;width:57px;height:27px;background:#f0f7fa;line-height:27px;padding-top:2px;text-align:center;color:#333">1.34</div><div style="left:673px;top:514px;width:56px;height:27px;background:#f0f7fa;line-height:27px;padding-top:2px;text-align:center;color:#3b5f9d">5.31</div><div style="left:730px;top:514px;width:57px;height:27px;background:#f0f7fa;line-height:27px;padding-top:2px;text-align:center;color:#333">6.82</div><div style="left:788px;top:514px;width:35px;height:27px;background:#ffffff;line-height:27px;padding-top:2px;text-align:center;color:#008000"><span class="z">负</span></div><div style="left:824px;top:514px;width:34px;height:27px;background:#ffffff;line-height:27px;padding-top:2px;text-align:center;color:#008000"><span class="z">输</span></div><div style="left:859px;top:514px;width:51px;height:27px;background:#ffffff;line-height:27px;padding-top:2px;text-align:center;color:#ff0000"><span class="z">大</span></div><div style="left:2px;top:542px;width:67px;height:27px;background:#00a8aa;line-height:27px;padding-top:2px;text-align:center;color:#fff"><span class="z">球会友谊</span></div><div style="left:70px;top:542px;width:66px;height:27px;background:#efefef;line-height:27px;padding-top:2px;text-align:center;color:#333">24-08-06</div><div style="left:137px;top:542px;width:121px;height:27px;background:#efefef;line-height:27px;padding-top:2px;text-align:center;color:#000"><span class="z">富勒姆</span>(<span class="z">中</span>)</div><div style="left:259px;top:542px;width:79px;height:27px;background:#efefef;line-height:27px;padding-top:2px;text-align:center;color:#333"><span style="color:#ff0000">1-2</span>(0-2)</div><div style="left:339px;top:542px;width:35px;height:27px;background:#efefef;line-height:27px;padding-top:2px;text-align:center;color:#333">3-3</div><div style="left:375px;top:542px;width:98px;height:27px;background:#efefef;line-height:27px;padding-top:2px;text-align:center;color:#000"><span style="color:#008000"><span class="z">塞维利亚</span></span></div><div style="left:474px;top:542px;width:38px;height:27px;background:#fdf9f6;line-height:27px;padding-top:2px;text-align:center;color:#333">0.78</div><div style="left:513px;top:542px;width:63px;height:27px;background:#fdf9f6;line-height:27px;padding-top:2px;text-align:center;color:#2358ab"><span style="color:#ff0000;position:relative;top:-3px;font-size:14px">*</span><span class="z">平</span><span style="margin:0 0.5px">/</span><span class="z">半</span></div><div style="left:577px;top:542px;width:37px;height:27px;background:#fdf9f6;line-height:27px;padding-top:2px;text-align:center;color:#333">1.04</div><div style="left:615px;top:542px;width:57px;height:27px;background:#f0f7fa;line-height:27px;padding-top:2px;text-align:center;color:#333">2.66</div><div style="left:673px;top:542px;width:56px;height:27px;background:#f0f7fa;line-height:27px;padding-top:2px;text-align:center;color:#3b5f9d">3.54</div><div style="left:730px;top:542px;width:57px;height:27px;background:#f0f7fa;line-height:27px;padding-top:2px;text-align:center;color:#333">2.29</div><div style="left:788px;top:542px;width:35px;height:27px;background:#efefef;line-height:27px;padding-top:2px;text-align:center;color:#ff0000"><span class="z">胜</span></div><div style="left:824px;top:542px;width:34px;height:27px;background:#efefef;line-height:27px;padding-top:2px;text-align:center;color:#ff0000"><span class="z">赢</span></div><div style="left:859px;top:542px;width:51px;height:27px;background:#efefef;line-height:27px;padding-top:2px;text-align:center;color:#ff0000"><span class="z">大</span></div><div style="left:2px;top:570px;width:67px;height:27px;background:#00a8aa;line-height:27px;padding-top:2px;text-align:center;color:#fff"><span class="z">球会友谊</span></div><div style="left:70px;top:570px;width:66px;height:27px;background:#ffffff;line-height:27px;padding-top:2px;text-align:center;color:#333">24-08-01</div><div style="left:137px;top:570px;width:121px;height:27px;background:#ffffff;line-height:27px;padding-top:2px;text-align:center;color:#000"><span style="color:#008000"><span class="z">塞维利亚</span></span></div><div style="left:259px;top:570px;width:79px;height:27px;background:#ffffff;line-height:27px;padding-top:2px;text-align:center;color:#333"><span style="color:#ff0000">2-0</span>(1-0)</div><div style="left:339px;top:570px;width:35px;height:27px;background:#ffffff;line-height:27px;padding-top:2px;text-align:center;color:#333">8-3</div><div style="left:375px;top:570px;width:98px;height:27px;background:#ffffff;line-height:27px;padding-top:2px;text-align:center;color:#000"><span class="z">格拉纳达</span></div><div style="left:474px;top:570px;width:38px;height:27px;background:#fdf9f6;line-height:27px;padding-top:2px;text-align:center;color:#333">0.98</div><div style="left:513px;top:570px;width:63px;height:27px;background:#fdf9f6;line-height:27px;padding-top:2px;text-align:center;color:#2358ab"><span class="z">一球</span></div><div style="left:577px;top:570px;width:37px;height:27px;background:#fdf9f6;line-height:27px;padding-top:2px;text-align:center;color:#333">0.84</div><div style="left:615px;top:570px;width:57px;height:27px;background:#f0f7fa;line-height:27px;padding-top:2px;text-align:center;color:#333">1.54</div><div style="left:673px;top:570px;width:56px;height:27px;background:#f0f7fa;line-height:27px;padding-top:2px;text-align:center;color:#3b5f9d">4.10</div><div style="left:730px;top:570px;width:57px;height:27px;background:#f0f7fa;line-height:27px;padding-top:2px;text-align:center;color:#333">4.93</div><div style="left:788px;top:570px;width:35px;height:27px;background:#ffffff;line-height:27px;padding-top:2px;text-align:center;color:#ff0000"><span class="z">胜</span></div><div style="left:824px;top:570px;width:34px;height:27px;background:#ffffff;line-height:27px;padding-top:2px;text-align:center;color:#ff0000"><span class="z">赢</span></div><div style="left:859px;top:570px;width:51px;height:27px;background:#ffffff;line-height:27px;padding-top:2px;text-align:center;color:#008000"><span class="z">小</span></div><div style="left:2px;top:598px;width:67px;height:27px;background:#00a8aa;line-height:27px;padding-top:2px;text-align:center;color:#fff"><span class="z">球会友谊</span></div><div style="left:70px;top:598px;width:66px;height:27px;background:#efefef;line-height:27px;padding-top:2px;text-align:center;color:#333">24-07-27</div><div style="left:137px;top:598px;width:121px;height:27px;background:#efefef;line-height:27px;padding-top:2px;text-align:center;color:#000"><span style="color:#008000"><span class="z">塞维利亚</span></span></div><div style="left:259px;top:598px;width:79px;height:27px;background:#efefef;line-height:27px;padding-top:2px;text-align:center;color:#333"><span style="color:#ff0000">1-0</span>(1-0)</div><div style="left:339px;top:598px;width:35px;height:27px;background:#efefef;line-height:27px;padding-top:2px;text-align:center;color:#333">1-4</div><div style="left:375px;top:598px;width:98px;height:27px;background:#efefef;line-height:27px;padding-top:2px;text-align:center;color:#000"><span class="z">吉达联合</span></div><div style="left:474px;top:598px;width:38px;height:27px;background:#fdf9f6;line-height:27px;padding-top:2px;text-align:center;color:#333">1.03</div><div style="left:513px;top:598px;width:63px;height:27px;background:#fdf9f6;line-height:27px;padding-top:2px;text-align:center;color:#2358ab"><span class="z">一</span><span style="margin:0 0.5px">/</span><span class="z">球半</span></div><div style="left:577px;top:598px;width:37px;height:27px;background:#fdf9f6;line-height:27px;padding-top:2px;text-align:center;color:#333">0.79</div><div style="left:615px;top:598px;width:57px;height:27px;background:#f0f7fa;line-height:27px;padding-top:2px;text-align:center;color:#333">1.45</div><div style="left:673px;top:598px;width:56px;height:27px;background:#f0f7fa;line-height:27px;padding-top:2px;text-align:center;color:#3b5f9d">4.45</div><div style="left:730px;top:598px;width:57px;height:27px;background:#f0f7fa;line-height:27px;padding-top:2px;text-align:center;color:#333">5.76</div><div style="left:788px;top:598px;width:35px;height:27px;background:#efefef;line-height:27px;padding-top:2px;text-align:center;color:#ff0000"><span class="z">胜</span></div><div style="left:824px;top:598px;width:34px;height:27px;background:#efefef;line-height:27px;padding-top:2px;text-align:center;color:#008000"><span class="z">输</span></div><div style="left:859px;top:598px;width:51px;height:27px;background:#efefef;line-height:27px;padding-top:2px;text-align:center;color:#008000"><span class="z">小</span></div><div style="left:2px;top:626px;width:67px;height:27px;background:#00a8aa;line-height:27px;padding-top:2px;text-align:center;color:#fff"><span class="z">球会友谊</span></div><div style="left:70px;top:626px;width:66px;height:27px;background:#ffffff;line-height:27px;padding-top:2px;text-align:center;color:#333">24-07-24</div><div style="left:137px;top:626px;width:121px;height:27px;background:#ffffff;line-height:27px;padding-top:2px;text-align:center;color:#000"><span class="rc">1</span><span class="z">里斯本竞技</span>(<span class="z">中</span>)</div><div style="left:259px;top:626px;width:79px;height:27px;background:#ffffff;line-height:27px;padding-top:2px;text-align:center;color:#333"><span style="color:#ff0000">2-1</span>(1-0)</div><div style="left:339px;top:626px;width:35px;height:27px;background:#ffffff;line-height:27px;padding-top:2px;text-align:center;color:#333">0-3</div><div style="left:375px;top:626px;width:98px;height:27px;background:#ffffff;line-height:27px;padding-top:2px;text-align:center;color:#000"><span style="color:#008000"><span class="z">塞维利亚</span></span></div><div style="left:474px;top:626px;width:38px;height:27px;background:#fdf9f6;line-height:27px;padding-top:2px;text-align:center;color:#333">0.84</div><div style="left:513px;top:626px;width:63px;height:27px;background:#fdf9f6;line-height:27px;padding-top:2px;text-align:center;color:#2358ab"><span class="z">半球</span></div><div style="left:577px;top:626px;width:37px;height:27px;background:#fdf9f6;line-height:27px;padding-top:2px;text-align:center;color:#333">0.98</div><div style="left:615px;top:626px;width:57px;height:27px;background:#f0f7fa;line-height:27px;padding-top:2px;text-align:center;color:#333">1.78</div><div style="left:673px;top:626px;width:56px;height:27px;background:#f0f7fa;line-height:27px;padding-top:2px;text-align:center;color:#3b5f9d">3.84</div><div style="left:730px;top:626px;width:57px;height:27px;background:#f0f7fa;line-height:27px;padding-top:2px;text-align:center;color:#333">3.68</div><div style="left:788px;top:626px;width:35px;height:27px;background:#ffffff;line-height:27px;padding-top:2px;text-align:center;color:#008000"><span class="z">负</span></div><div style="left:824px;top:626px;width:34px;height:27px;background:#ffffff;line-height:27px;padding-top:2px;text-align:center;color:#008000"><span class="z">输</span></div><div style="left:859px;top:626px;width:51px;height:27px;background:#ffffff;line-height:27px;padding-top:2px;text-align:center;color:#008000"><span class="z">小</span></div><div style="left:2px;top:654px;width:67px;height:27px;background:#00a8aa;line-height:27px;padding-top:2px;text-align:center;color:#fff"><span class="z">球会友谊</span></div><div style="left:70px;top:654px;width:66px;height:27px;background:#efefef;line-height:27px;padding-top:2px;text-align:center;color:#333">24-07-16</div><div style="left:137px;top:654px;width:121px;height:27px;background:#efefef;line-height:27px;padding-top:2px;text-align:center;color:#000"><span style="color:#008000"><span class="z">塞维利亚</span></span></div><div style="left:259px;top:654px;width:79px;height:27px;background:#efefef;line-height:27px;padding-top:2px;text-align:center;color:#333"><span style="color:#ff0000">0-2</span>(0-1)</div><div style="left:339px;top:654px;width:35px;height:27px;background:#efefef;line-height:27px;padding-top:2px;text-align:center;color:#333">6-4</div><div style="left:375px;top:654px;width:98px;height:27px;background:#efefef;line-height:27px;padding-top:2px;text-align:center;color:#000"><span class="z">奥兰多海盗</span></div><div style="left:474px;top:654px;width:38px;height:27px;background:#fdf9f6;line-height:27px;padding-top:2px;text-align:center;color:#333">0.80</div><div style="left:513px;top:654px;width:63px;height:27px;background:#fdf9f6;line-height:27px;padding-top:2px;text-align:center;color:#2358ab"><span class="z">一球</span></div><div style="left:577px;top:654px;width:37px;height:27px;background:#fdf9f6;line-height:27px;padding-top:2px;text-align:center;color:#333">1.02</div><div style="left:615px;top:654px;width:57px;height:27px;background:#f0f7fa;line-height:27px;padding-top:2px;text-align:center;color:#333">1.36</div><div style="left:673px;top:654px;width:56px;height:27px;background:#f0f7fa;line-height:27px;padding-top:2px;text-align:center;color:#3b5f9d">4.71</div><div style="left:730px;top:654px;width:57px;height:27px;background:#f0f7fa;line-height:27px;padding-top:2px;text-align:center;color:#333">7.01</div><div style="left:788px;top:654px;width:35px;height:27px;background:#efefef;line-height:27px;padding-top:2px;text-align:center;color:#008000"><span class="z">负</span></div><div style="left:824px;top:654px;width:34px;height:27px;background:#efefef;line-height:27px;padding-top:2px;text-align:center;color:#008000"><span class="z">输</span></div><div style="left:859px;top:654px;width:51px;height:27px;background:#efefef;line-height:27px;padding-top:2px;text-align:center;color:#008000"><span class="z">小</span></div><div style="left:2px;top:682px;width:67px;height:27px;background:#006633;line-height:27px;padding-top:2px;text-align:center;color:#fff"><span class="z">西甲</span></div><div style="left:70px;top:682px;width:66px;height:27px;background:#ffffff;line-height:27px;padding-top:2px;text-align:center;color:#333">24-05-27</div><div style="left:137px;top:682px;width:121px;height:27px;background:#ffffff;line-height:27px;padding-top:2px;text-align:center;color:#000"><span style="color:#008000"><span class="z">塞维利亚</span></span></div><div style="left:259px;top:682px;width:79px;height:27px;background:#ffffff;line-height:27px;padding-top:2px;text-align:center;color:#333"><span style="color:#ff0000">1-2</span>(1-1)</div><div style="left:339px;top:682px;width:35px;height:27px;background:#ffffff;line-height:27px;padding-top:2px;text-align:center;color:#333">6-5</div><div style="left:375px;top:682px;width:98px;height:27px;background:#ffffff;line-height:27px;padding-top:2px;text-align:center;color:#000"><span class="z">巴塞罗那</span></div><div style="left:474px;top:682px;width:38px;height:27px;background:#fdf9f6;line-height:27px;padding-top:2px;text-align:center;color:#333">1.06</div><div style="left:513px;top:682px;width:63px;height:27px;background:#fdf9f6;line-height:27px;padding-top:2px;text-align:center;color:#2358ab"><span style="color:#ff0000;position:relative;top:-3px;font-size:14px">*</span><span class="z">半</span><span style="margin:0 0.5px">/</span><span class="z">一</span></div><div style="left:577px;top:682px;width:37px;height:27px;background:#fdf9f6;line-height:27px;padding-top:2px;text-align:center;color:#333">0.82</div><div style="left:615px;top:682px;width:57px;height:27px;background:#f0f7fa;line-height:27px;padding-top:2px;text-align:center;color:#333">4.18</div><div style="left:673px;top:682px;width:56px;height:27px;background:#f0f7fa;line-height:27px;padding-top:2px;text-align:center;color:#3b5f9d">4.17</div><div style="left:730px;top:682px;width:57px;height:27px;background:#f0f7fa;line-height:27px;padding-top:2px;text-align:center;color:#333">1.74</div><div style="left:788px;top:682px;width:35px;height:27px;background:#ffffff;line-height:27px;padding-top:2px;text-align:center;color:#008000"><span class="z">负</span></div><div style="left:824px;top:682px;width:34px;height:27px;background:#ffffff;line-height:27px;padding-top:2px;text-align:center;color:#008000"><span class="z">输</span></div><div style="left:859px;top:682px;width:51px;height:27px;background:#ffffff;line-height:27px;padding-top:2px;text-align:center;color:#008000"><span class="z">小</span></div><div style="left:2px;top:710px;width:67px;height:27px;background:#006633;line-height:27px;padding-top:2px;text-align:center;color:#fff"><span class="z">西甲</span></div><div style="left:70px;top:710px;width:66px;height:27px;background:#efefef;line-height:27px;padding-top:2px;text-align:center;color:#333">24-05-20</div><div style="left:137px;top:710px;width:121px;height:27px;background:#efefef;line-height:27px;padding-top:2px;text-align:center;color:#000"><span class="z">毕尔巴鄂竞技</span></div><div style="left:259px;top:710px;width:79px;height:27px;background:#efefef;line-height:27px;padding-top:2px;text-align:center;color:#333"><span style="color:#ff0000">2-0</span>(2-0)</div><div style="left:339px;top:710px;width:35px;height:27px;background:#efefef;line-height:27px;padding-top:2px;text-align:center;color:#333">8-3</div><div style="left:375px;top:710px;width:98px;height:27px;background:#efefef;line-height:27px;padding-top:2px;text-align:center;color:#000"><span style="color:#008000"><span class="z">塞维利亚</span></span></div><div style="left:474px;top:710px;width:38px;height:27px;background:#fdf9f6;line-height:27px;padding-top:2px;text-align:center;color:#333">0.93</div><div style="left:513px;top:710px;width:63px;height:27px;background:#fdf9f6;line-height:27px;padding-top:2px;text-align:center;color:#2358ab"><span class="z">一球</span></div><div style="left:577px;top:710px;width:37px;height:27px;background:#fdf9f6;line-height:27px;padding-top:2px;text-align:center;color:#333">0.95</div><div style="left:615px;top:710px;width:57px;height:27px;background:#f0f7fa;line-height:27px;padding-top:2px;text-align:center;color:#333">1.57</div><div style="left:673px;top:710px;width:56px;height:27px;background:#f0f7fa;line-height:27px;padding-top:2px;text-align:center;color:#3b5f9d">4.15</div><div style="left:730px;top:710px;width:57px;height:27px;background:#f0f7fa;line-height:27px;padding-top:2px;text-align:center;color:#333">5.62</div><div style="left:788px;top:710px;width:35px;height:27px;background:#efefef;line-height:27px;padding-top:2px;text-align:center;color:#008000"><span class="z">负</span></div><div style="left:824px;top:710px;width:34px;height:27px;background:#efefef;line-height:27px;padding-top:2px;text-align:center;color:#008000"><span class="z">输</span></div><div style="left:859px;top:710px;width:51px;height:27px;background:#efefef;line-height:27px;padding-top:2px;text-align:center;color:#008000"><span class="z">小</span></div>
</body></html>
